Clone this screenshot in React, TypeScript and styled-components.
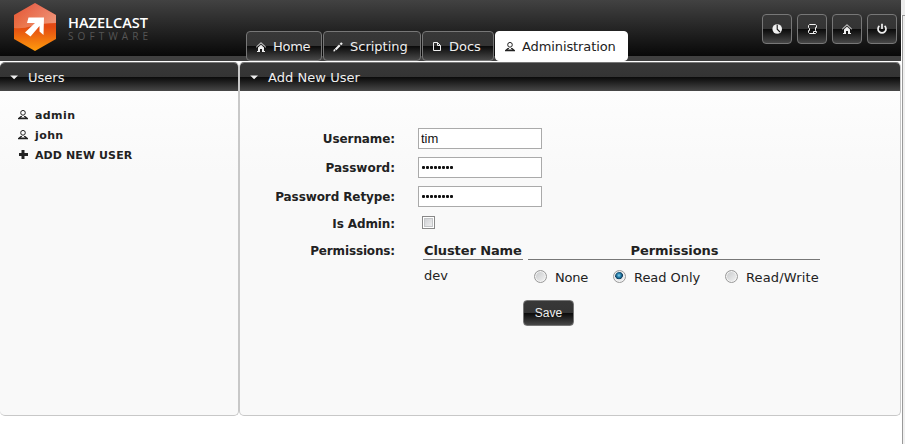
import React from "react";
import styled, { createGlobalStyle, css } from "styled-components";

const GlobalStyle = createGlobalStyle`
  * { box-sizing: border-box; }
  body {
    margin: 0;
    background: #fff;
    overflow: hidden;
    font: 13px/16px "DejaVu Sans", Verdana, sans-serif;
    color: #222;
  }
`;

const glossy = css`
  background: linear-gradient(#383838 0, #343434 50%, #0a0a0a 50%, #181818 62%, #484848 100%);
`;

const Page = styled.div`
  display: flex;
  width: 905px;
  height: 444px;
`;

const Main = styled.div`
  width: 901px;
  flex: none;
`;

const ScrollEdge = styled.div`
  width: 4px;
  display: flex;
  flex-direction: column;
`;

const EdgeTop = styled.div`
  height: 15px;
  background: #ececec;
`;

const EdgeTrack = styled.div`
  flex: 1;
  margin-left: 1px;
  border-left: 1px solid #999;
  border-top: 1px solid #999;
  background: #f0f0f0;
`;

const Header = styled.header`
  display: flex;
  height: 61px;
  background: linear-gradient(#424242 0, #080808 56px, #404040 56px);
`;

const LogoBox = styled.div`
  display: flex;
  width: 246px;
  height: 56px;
`;

const Wordmark = styled.div`
  display: flex;
  flex-direction: column;
  padding: 15px 0 0 12px;
`;

const Brand = styled.svg<{ $height: number; $color: string }>`
  display: block;
  width: 84px;
  height: ${(p) => p.$height}px;
  fill: ${(p) => p.$color};
  overflow: visible;
`;

const Tabs = styled.nav`
  display: flex;
  gap: 1px;
  padding-top: 31px;
`;

const Tab = styled.a<{ $width: number; $active?: boolean }>`
  display: flex;
  align-items: center;
  width: ${(p) => p.$width}px;
  height: 30px;
  padding: 1px 0 0 6px;
  gap: 4px;
  border: 1px solid ${(p) => (p.$active ? "#fff" : "#777")};
  border-radius: 4px;
  color: ${(p) => (p.$active ? "#222" : "#eee")};
  ${(p) => (p.$active ? "background: #fff;" : glossy)}
`;

const Label = styled.span<{ $spacing?: number }>`
  letter-spacing: ${(p) => p.$spacing ?? 0}px;
  white-space: nowrap;
`;

const Tools = styled.div`
  display: flex;
  gap: 5px;
  margin-left: auto;
  padding: 14px 4px 0 0;
`;

const ToolButton = styled.button`
  width: 30px;
  height: 30px;
  padding: 0;
  display: grid;
  place-items: center;
  border: 1px solid #777;
  border-radius: 4px;
  color: #f0f0f0;
  ${glossy}
`;

const Panels = styled.main`
  display: flex;
  height: 355px;
  padding-top: 1px;
`;

const Panel = styled.section<{ $width: number }>`
  width: ${(p) => p.$width}px;
  border: 1px solid #c8c8c8;
  border-top-color: #777;
  border-radius: 5px;
  overflow: hidden;
  background: linear-gradient(#fdfdfd 29px, #f9f9f9 110px);
`;

const UsersPanel = styled(Panel)`
  border-left: 0;
`;

const PanelTitle = styled.h2`
  display: flex;
  align-items: center;
  height: 28px;
  margin: 0;
  padding: 1px 0 0 6px;
  gap: 6px;
  font-size: 13px;
  font-weight: normal;
  color: #eee;
  ${glossy}
`;

const UserList = styled.ul`
  list-style: none;
  margin: 0;
  padding: 14px 0 0 15px;
  font-size: 11px;
  font-weight: bold;
`;

const UserItem = styled.li`
  display: flex;
  align-items: center;
  gap: 4px;
  height: 20px;
  ${Label} { padding-top: 2px; }
`;

const Form = styled.form`
  display: grid;
  grid-template-columns: 155px 403px;
  column-gap: 23px;
  grid-template-rows: 29px 29px 27px 27px 60px 26px;
  padding-top: 37px;
  align-items: start;
`;

const FieldName = styled.label`
  justify-self: end;
  height: 22px;
  line-height: 22px;
  font-size: 12px;
  font-weight: bold;
  white-space: nowrap;
`;

const Field = styled.input`
  width: 124px;
  height: 21px;
  padding: 0 2px;
  border: 1px solid #aaa;
  background: #fff;
  color: #111;
  font: 13px "Liberation Sans", Arial, sans-serif;
`;

const PasswordField = styled.div`
  display: flex;
  align-items: center;
  gap: 1px;
  width: 124px;
  height: 21px;
  padding: 0 0 1px 3px;
  border: 1px solid #aaa;
  background: #fff;
`;

const Dot = styled.i`
  width: 3px;
  height: 3px;
  border-radius: 1px;
  background: #111;
`;

const Checkbox = styled.input`
  appearance: none;
  width: 13px;
  height: 13px;
  margin: 3px 0 0 4px;
  border: 1px solid #888;
  background: linear-gradient(135deg, #c8cace, #f5f5f5);
  box-shadow: inset 0 0 0 1px #fff, inset 0 0 0 2px #c4c6c8;
`;

const Permissions = styled.div`
  display: grid;
  grid-template-columns: 100px 292px;
  column-gap: 5px;
  margin: 3px 0 0 5px;
`;

const ColumnHead = styled.div<{ $center?: boolean }>`
  height: 17px;
  padding-left: 1px;
  border-bottom: 1px solid #777;
  font-weight: bold;
  text-align: ${(p) => (p.$center ? "center" : "left")};
`;

const Cluster = styled.div`
  padding: 8px 0 0 1px;
`;

const Options = styled.div`
  display: grid;
  grid-template-columns: 79px 112px 1fr;
  padding: 10px 0 0 6px;
`;

const Option = styled.label`
  display: flex;
  align-items: flex-start;
  gap: 8px;
`;

const Radio = styled.input`
  appearance: none;
  flex: none;
  width: 13px;
  height: 13px;
  margin: 0;
  border: 1px solid #999;
  border-radius: 50%;
  background: linear-gradient(135deg, #c6c8ca, #f4f4f4);
  box-shadow: inset 0 0 0 1px #f4f4f4;
  &:checked {
    background: radial-gradient(circle at 45% 40%, #8ed2ee 0, #2580ab 2px, #123c5c 3.6px, #e8eaec 4.2px);
  }
`;

const SaveButton = styled.button`
  grid-column: 2;
  width: 51px;
  height: 26px;
  margin-left: 105px;
  padding: 0;
  border: 1px solid #777;
  border-radius: 4px;
  color: #eee;
  font: 12px "Liberation Sans", Arial, sans-serif;
  ${glossy}
`;

const Glyph = styled.svg`
  display: block;
  flex: none;
  width: 16px;
  height: 16px;
  fill: currentColor;
  stroke: none;
`;

const shapes = {
  home: (
    <>
      <path d="M3.2 8.2 8 3.7 12.8 8.2" fill="none" stroke="currentColor" strokeWidth="1" />
      <path d="M5 8.6 8 5.8 11 8.6V12H12V13H9V10H7V13H4V12H5Z" />
    </>
  ),
  pencil: (
    <>
      <path d="M3.5 12.5V11L4.5 10 5.5 11 5 12.3ZM4.8 9.7 9 5.5 10.5 7 6.3 11.2Z" />
      <path d="M9.7 4.8 11.2 3.2 12.8 4.8 11.2 6.3Z" />
    </>
  ),
  doc: <path d="M4.5 3.5H8.5L11.5 6.5V11.5H4.5ZM8.5 3.5V6.5H11.5" fill="none" stroke="currentColor" />,
  person: (
    <>
      <ellipse cx="8" cy="5.8" rx="2.3" ry="2.4" fill="none" stroke="currentColor" />
      <path d="M3 12.3V11.3L5.7 9H7V9.7L5.5 10.5H10.5L9 9.7V9H10.3L13 11.3V12.3Z" />
    </>
  ),
  plus: <path d="M6.5 3H9.5V6H13V9H9.5V12H6.5V9H4V6H6.5Z" />,
  script: (
    <path d="M5.5 3.5H11.5L12.5 4.5V6.5H11.5V9.5L12.5 10.5V11.5L11.5 12.5H5.5L4.5 11.5V9.5H5.5V7.5L4.5 6.5V4.5ZM9.5 12V10.5H12" fill="none" stroke="currentColor" />
  ),
  clock: (
    <>
      <circle cx="8.2" cy="8" r="4.8" />
      <path d="M8.2 3.8V8.2L11 11" fill="none" stroke="#151515" strokeWidth="1.1" />
    </>
  ),
  power: (
    <path d="M5.4 4.9A4 4 0 1 0 10.6 4.9M8 2.8V8" fill="none" stroke="currentColor" strokeWidth="1.7" />
  ),
  down: <path d="M4.2 5.5H12L8.1 9.3Z" />,
};

function Icon({ name }: { name: keyof typeof shapes }) {
  return (
    <Glyph viewBox="0 0 16 16" aria-hidden="true">
      {shapes[name]}
    </Glyph>
  );
}

function Emblem() {
  return (
    <svg width="56" height="56" viewBox="0 0 56 56" aria-label="Hazelcast">
      <defs>
        <linearGradient id="hex" x1="0" y1="0" x2="0" y2="1">
          <stop offset="0" stopColor="#e3482c" />
          <stop offset=".5" stopColor="#e44a12" />
          <stop offset="1" stopColor="#ff9c0c" />
        </linearGradient>
        <linearGradient id="shine" x1="0" y1="0" x2="1" y2=".65">
          <stop offset="0" stopColor="#fff" stopOpacity=".05" />
          <stop offset="1" stopColor="#fff" stopOpacity=".4" />
        </linearGradient>
      </defs>
      <path d="M35 3 56 15V39L35 51 14 39V15Z" fill="url(#hex)" />
      <path d="M35 3 56 15V23Q43 23 32 26Q23 29 14 28V15Z" fill="url(#shine)" />
      <path d="M28.5 17.5H44L43.5 35 39.5 31.5V26L30.5 36.5 25 32.5 35 23H27Z" fill="#fff" />
    </svg>
  );
}

function Password() {
  return (
    <PasswordField>
      {Array.from({ length: 8 }, (_, i) => <Dot key={i} />)}
    </PasswordField>
  );
}

export default function App() {
  return (
    <Page>
      <GlobalStyle />
      <Main>
        <Header>
          <LogoBox>
            <Emblem />
            <Wordmark>
              <Brand $height={15} $color="#fff">
                <text y="13" textLength="80" lengthAdjust="spacingAndGlyphs" fontFamily="Open Sans" fontWeight="600" fontSize="15">HAZELCAST</text>
              </Brand>
              <Brand $height={12} $color="#555">
                <text y="10" textLength="80" fontFamily="Open Sans" fontSize="10">SOFTWARE</text>
              </Brand>
            </Wordmark>
          </LogoBox>
          <Tabs>
            <Tab $width={76}><Icon name="home" /><Label $spacing={-0.3}>Home</Label></Tab>
            <Tab $width={98}><Icon name="pencil" /><Label>Scripting</Label></Tab>
            <Tab $width={72}><Icon name="doc" /><Label>Docs</Label></Tab>
            <Tab $width={133} $active><Icon name="person" /><Label $spacing={-0.1}>Administration</Label></Tab>
          </Tabs>
          <Tools>
            <ToolButton aria-label="History"><Icon name="clock" /></ToolButton>
            <ToolButton aria-label="Scripts"><Icon name="script" /></ToolButton>
            <ToolButton aria-label="Home"><Icon name="home" /></ToolButton>
            <ToolButton aria-label="Log out"><Icon name="power" /></ToolButton>
          </Tools>
        </Header>
        <Panels>
          <UsersPanel $width={239}>
            <PanelTitle><Icon name="down" /><Label>Users</Label></PanelTitle>
            <UserList>
              <UserItem><Icon name="person" /><Label $spacing={0.4}>admin</Label></UserItem>
              <UserItem><Icon name="person" /><Label $spacing={0.4}>john</Label></UserItem>
              <UserItem><Icon name="plus" /><Label $spacing={0.1}>ADD NEW USER</Label></UserItem>
            </UserList>
          </UsersPanel>
          <Panel $width={662}>
            <PanelTitle><Icon name="down" /><Label $spacing={0.05}>Add New User</Label></PanelTitle>
            <Form>
              <FieldName><Label $spacing={-0.1}>Username:</Label></FieldName>
              <Field defaultValue="tim" />
              <FieldName><Label>Password:</Label></FieldName>
              <Password />
              <FieldName><Label $spacing={-0.1}>Password Retype:</Label></FieldName>
              <Password />
              <FieldName><Label $spacing={-0.1}>Is Admin:</Label></FieldName>
              <Checkbox type="checkbox" />
              <FieldName><Label $spacing={-0.15}>Permissions:</Label></FieldName>
              <Permissions>
                <ColumnHead><Label $spacing={-0.1}>Cluster Name</Label></ColumnHead>
                <ColumnHead $center><Label $spacing={-0.05}>Permissions</Label></ColumnHead>
                <Cluster>dev</Cluster>
                <Options>
                  <Option><Radio type="radio" name="access" /><Label $spacing={-0.2}>None</Label></Option>
                  <Option><Radio type="radio" name="access" defaultChecked /><Label $spacing={-0.05}>Read Only</Label></Option>
                  <Option><Radio type="radio" name="access" /><Label $spacing={0.15}>Read/Write</Label></Option>
                </Options>
              </Permissions>
              <SaveButton type="button">Save</SaveButton>
            </Form>
          </Panel>
        </Panels>
      </Main>
      <ScrollEdge><EdgeTop /><EdgeTrack /></ScrollEdge>
    </Page>
  );
}
